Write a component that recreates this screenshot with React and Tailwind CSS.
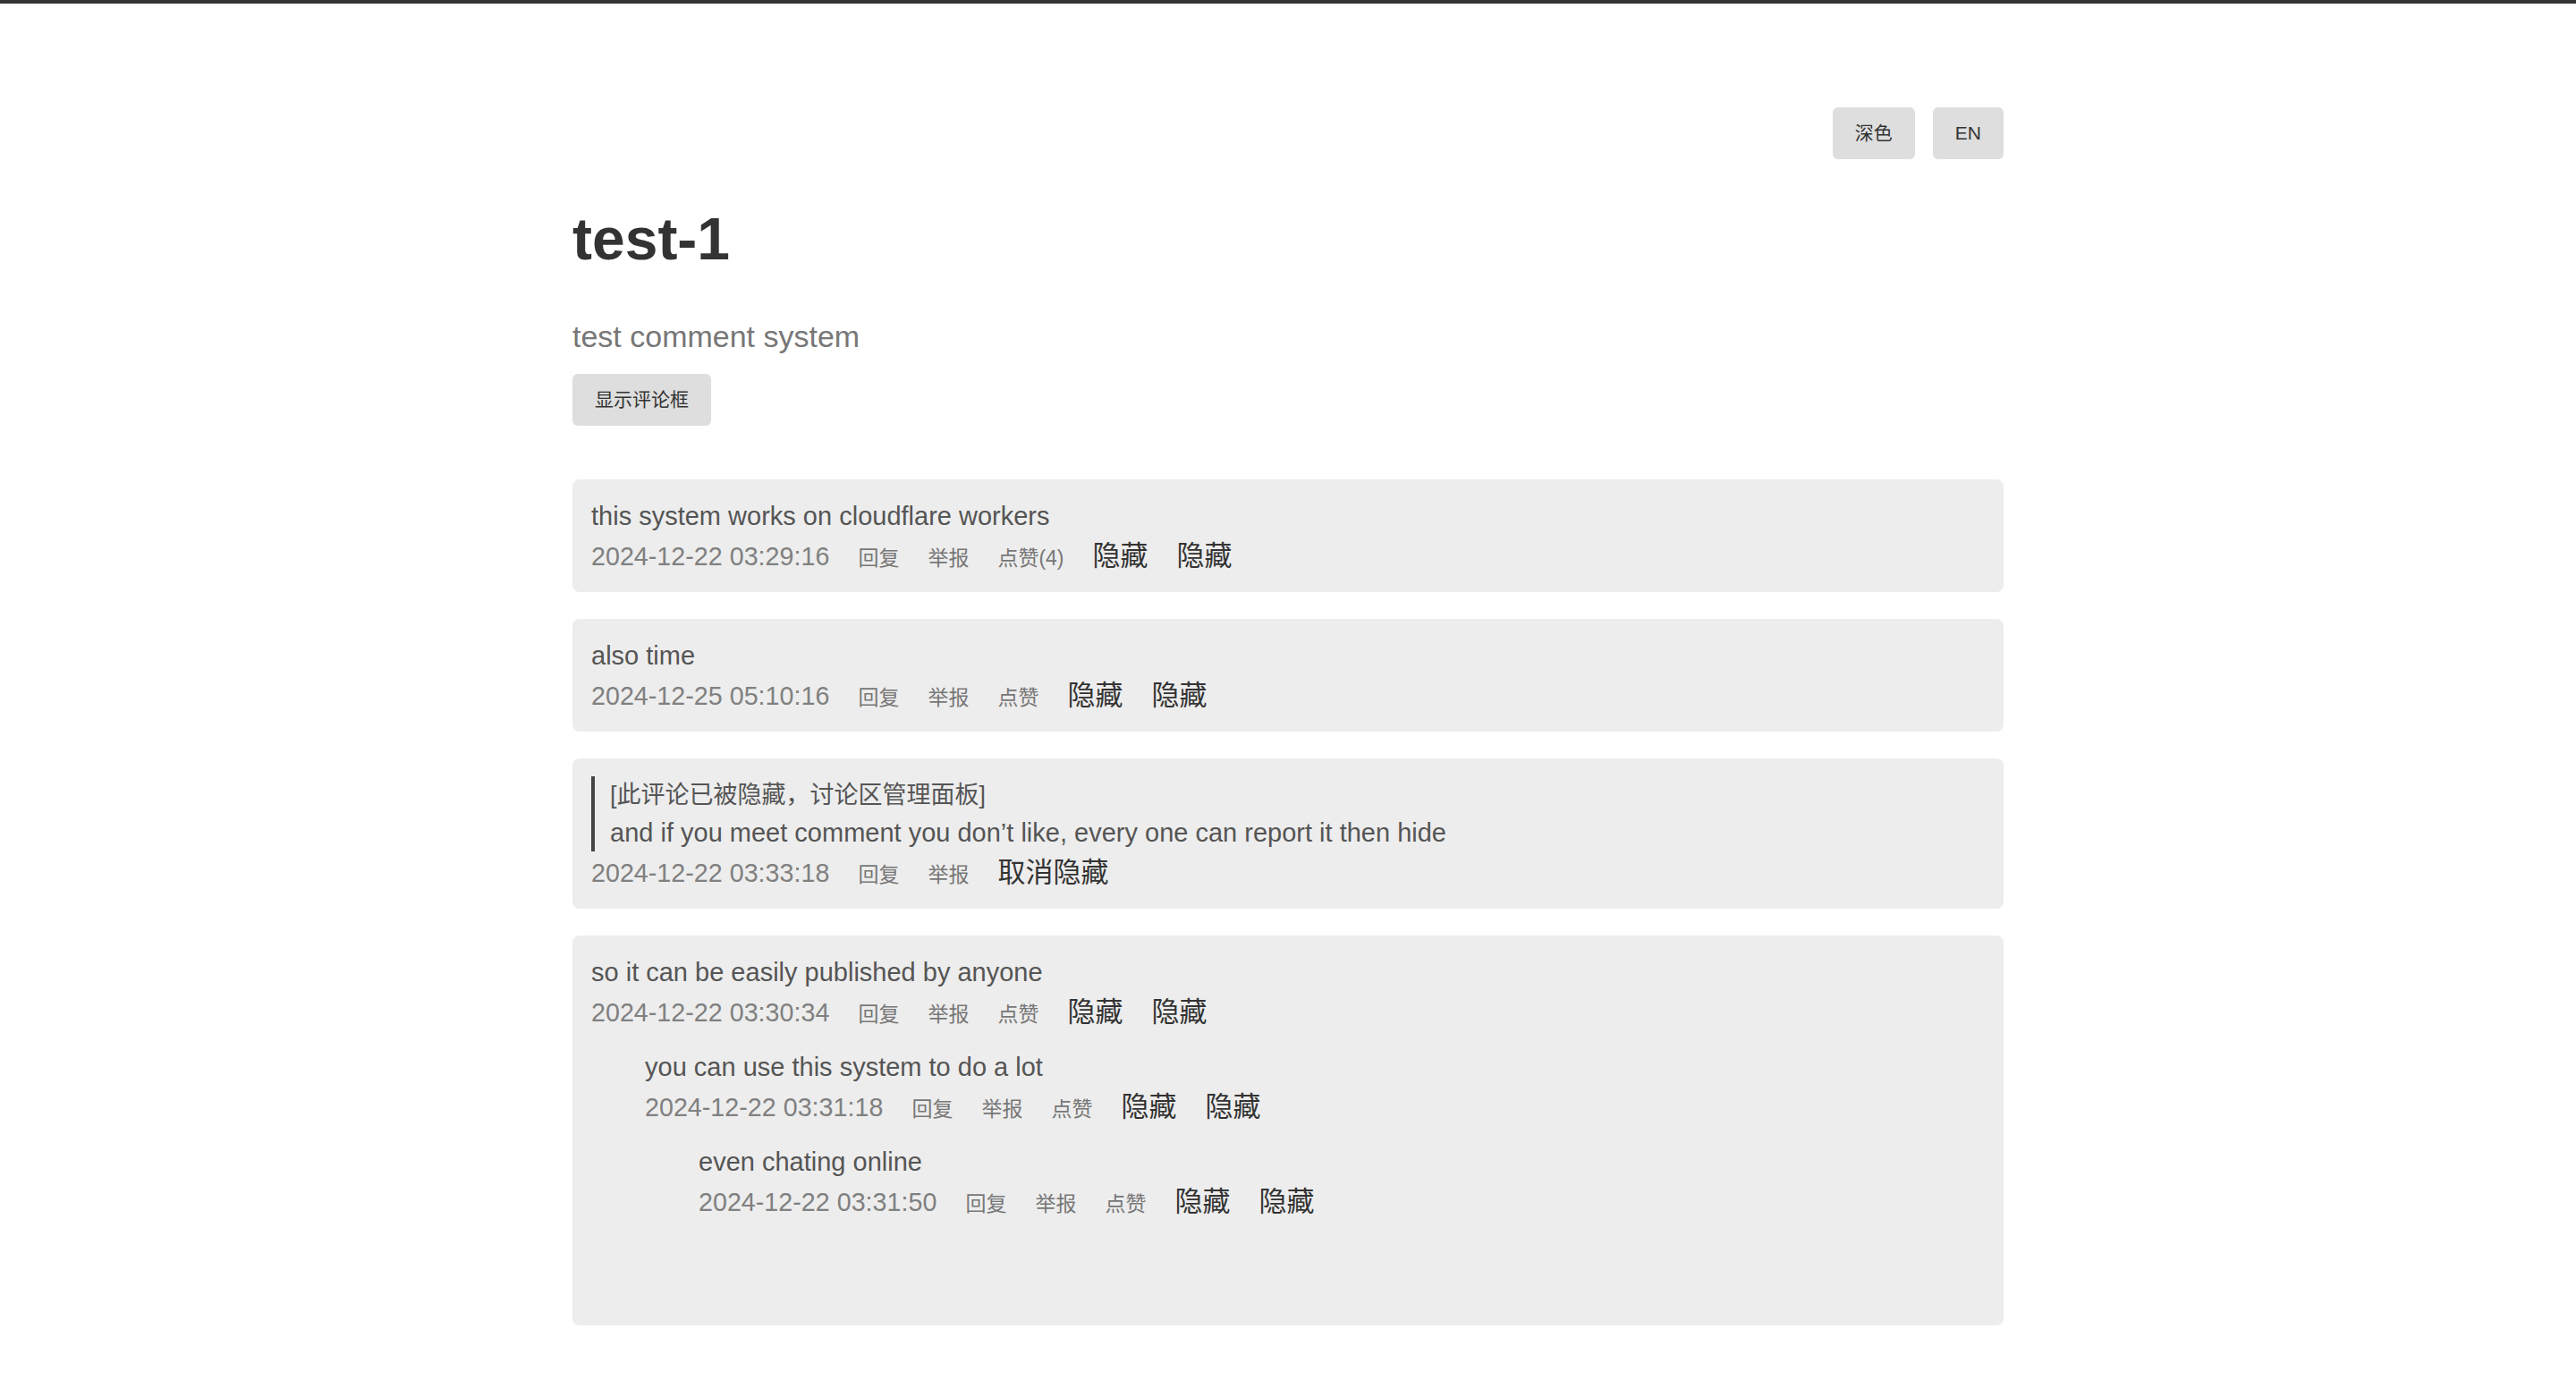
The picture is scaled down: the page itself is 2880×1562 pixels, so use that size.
import React from "react";

const FONT = "font-['Liberation_Sans','Noto_Sans_CJK_SC',sans-serif]";

function Meta({ time, like, unhide = false }) {
  return (
    <div className="flex items-baseline gap-[32px]">
      <span className="text-[28.7px] leading-[42px] text-[#808080]">{time}</span>
      <span className="text-[23px] leading-[34px] text-[#777]">回复</span>
      <span className="text-[23px] leading-[34px] text-[#777]">举报</span>
      {like !== undefined && (
        <span className="text-[23px] leading-[34px] text-[#777]">{like}</span>
      )}
      {unhide ? (
        <span className="text-[31px] leading-[48px] text-[#333]">取消隐藏</span>
      ) : (
        <>
          <span className="text-[31px] leading-[48px] text-[#333]">隐藏</span>
          <span className="text-[31px] leading-[48px] text-[#333]">隐藏</span>
        </>
      )}
    </div>
  );
}

function Text({ children }) {
  return <div className="text-[29px] leading-[42px] text-[#555]">{children}</div>;
}

function Box({ children }) {
  return (
    <div className="rounded-[8px] bg-[#ededed] px-[21px] pt-[20px] pb-[16px]">{children}</div>
  );
}

export default function App() {
  return (
    <div className={`${FONT} bg-white`}>
      <div className="h-[4px] bg-[#333]" />
      <div className="mx-auto w-[1600px] pb-[40px]">
        <div className="flex justify-end gap-[20px] pt-[116px]">
          <button className="h-[58px] rounded-[6px] bg-[#dedede] px-[25px] text-[21px] text-[#333]">
            深色
          </button>
          <button className="h-[58px] rounded-[6px] bg-[#dedede] px-[25px] text-[21px] text-[#333]">
            EN
          </button>
        </div>
        <h1 className="mt-[50px] text-[66px] leading-[79px] font-bold text-[#333]">test-1</h1>
        <p className="mt-[44px] text-[34px] leading-[50px] text-[#777]">test comment system</p>
        <button className="mt-[17px] h-[58px] rounded-[6px] bg-[#dedede] px-[25px] text-[21px] text-[#333]">
          显示评论框
        </button>

        <div className="mt-[60px] flex flex-col gap-[30px]">
          <Box>
            <Text>this system works on cloudflare workers</Text>
            <Meta time="2024-12-22 03:29:16" like="点赞(4)" />
          </Box>
          <Box>
            <Text>also time</Text>
            <Meta time="2024-12-25 05:10:16" like="点赞" />
          </Box>
          <Box>
            <div className="border-l-4 border-[#444] pl-[17px]">
              <div className="text-[27px] leading-[42px] text-[#555]">[此评论已被隐藏，讨论区管理面板]</div>
              <Text>and if you meet comment you don’t like, every one can report it then hide</Text>
            </div>
            <Meta time="2024-12-22 03:33:18" unhide />
          </Box>
          <Box>
            <Text>so it can be easily published by anyone</Text>
            <Meta time="2024-12-22 03:30:34" like="点赞" />
            <div className="ml-[60px] pt-[16px] pb-[33px]">
              <Text>you can use this system to do a lot</Text>
              <Meta time="2024-12-22 03:31:18" like="点赞" />
              <div className="ml-[60px] pt-[16px] pb-[33px]">
                <div className="pb-[16px]">
                  <Text>even chating online</Text>
                  <Meta time="2024-12-22 03:31:50" like="点赞" />
                </div>
              </div>
              <div className="h-[16px]" />
            </div>
          </Box>
        </div>
      </div>
    </div>
  );
}
